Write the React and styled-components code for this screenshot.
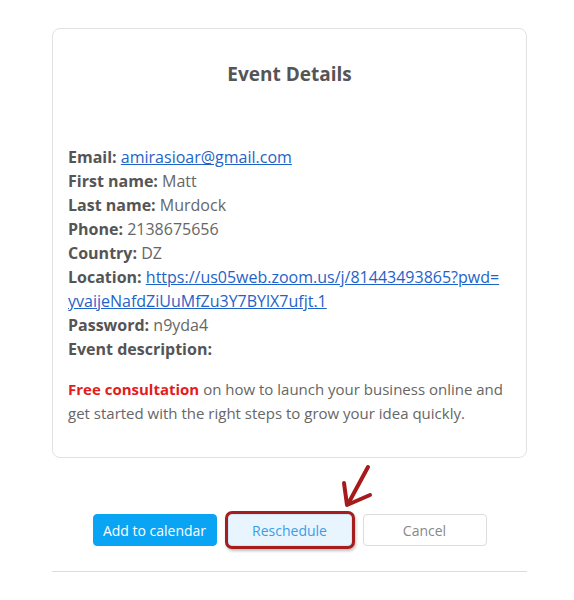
import styled, { createGlobalStyle } from 'styled-components';

const GlobalStyle = createGlobalStyle`
  body {
    margin: 0;
    background: #fff;
    font-family: "Open Sans", "Liberation Sans", sans-serif;
  }
`;

const Page = styled.div`
  width: 475px;
  margin-left: 52px;
  padding-top: 28px;
`;

const Card = styled.div`
  border: 1px solid #e2e2e2;
  border-radius: 8px;
  padding: 32px 15px 32px 15px;
`;

const Title = styled.h2`
  margin: 0 0 57px;
  text-align: center;
  font-size: 19px;
  line-height: 27px;
  font-weight: 700;
  color: #555;
`;

const Line = styled.div`
  font-size: 16px;
  line-height: 24px;
  color: #666;
`;

const Label = styled.b`
  color: #555;
  font-weight: 700;
`;

const Link = styled.a`
  color: #1f63c8;
  text-decoration: underline;
`;

const Description = styled.p`
  margin: 16px 0 0;
  font-size: 15px;
  line-height: 24px;
  color: #666;
`;

const Highlight = styled.b`
  color: #e41c1c;
  font-weight: 700;
`;

const Actions = styled.div`
  position: relative;
  display: flex;
  justify-content: center;
  gap: 11px;
  padding: 56px 0 25px;
  border-bottom: 1px solid #dcdcdc;
`;

const Button = styled.button`
  width: 124px;
  height: 32px;
  border-radius: 4px;
  font-family: "Open Sans", "Liberation Sans", sans-serif;
  font-size: 14px;
  cursor: pointer;
  border: 1px solid ${p => (p.$variant === 'primary' ? '#0aa4f4' : p.$variant === 'soft' ? '#cfe6f8' : '#dcdcdc')};
  background: ${p => (p.$variant === 'primary' ? '#0aa4f4' : p.$variant === 'soft' ? '#e9f5fe' : '#fff')};
  color: ${p => (p.$variant === 'primary' ? '#fff' : p.$variant === 'soft' ? '#3a9de6' : '#888')};
  box-shadow: ${p => (p.$marked ? '0 0 0 3px #a71c1c, 1px 2px 3px 3px rgba(0,0,0,0.25)' : 'none')};
`;

const Arrow = styled.svg`
  position: absolute;
  left: 285px;
  top: 9px;
  overflow: visible;
`;

export default function App() {
  return (
    <>
      <GlobalStyle />
      <Page>
        <Card>
          <Title>Event Details</Title>
          <Line><Label>Email:</Label> <Link href="#">amirasioar@gmail.com</Link></Line>
          <Line><Label>First name:</Label> Matt</Line>
          <Line><Label>Last name:</Label> Murdock</Line>
          <Line><Label>Phone:</Label> 2138675656</Line>
          <Line><Label>Country:</Label> DZ</Line>
          <Line>
            <Label>Location:</Label>{' '}
            <Link href="#">https://us05web.zoom.us/j/81443493865?pwd=<br />yvaijeNafdZiUuMfZu3Y7BYlX7ufjt.1</Link>
          </Line>
          <Line><Label>Password:</Label> n9yda4</Line>
          <Line><Label>Event description:</Label></Line>
          <Description>
            <Highlight>Free consultation</Highlight> on how to launch your business online and get started with the right steps to grow your idea quickly.
          </Description>
        </Card>
        <Actions>
          <Button $variant="primary">Add to calendar</Button>
          <Button $variant="soft" $marked>Reschedule</Button>
          <Button>Cancel</Button>
          <Arrow width="40" height="50" viewBox="0 0 40 50">
            <g stroke="#a51b1b" strokeWidth="4" strokeLinecap="round" fill="none">
              <path d="M31 0 L11 37" />
              <path d="M7 16 L10 38 L33 28" strokeLinejoin="round" />
            </g>
          </Arrow>
        </Actions>
      </Page>
    </>
  );
}
